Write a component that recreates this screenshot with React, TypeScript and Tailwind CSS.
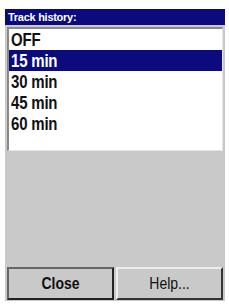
import React, { useState } from "react";

const options = ["OFF", "15 min", "30 min", "45 min", "60 min"];

const App = () => {
  const [selected, setSelected] = useState(1);

  return (
    <div
      className="w-[229px] h-[304px] bg-white flex flex-col pt-[9px] pl-[5px] pr-[4px] pb-[3px]"
      style={{ fontFamily: '"Liberation Sans", Arial, sans-serif' }}
    >
      <div className="flex-1 flex flex-col bg-[#c9c9c9]">
        {/* Title bar */}
        <div className="h-[16px] bg-[#0b0b7e] text-white text-[11px] font-bold leading-[16px] pl-[3px] tracking-tight">
          Track history:
        </div>

        {/* List box */}
        <div className="mt-[2px] ml-[2px] mr-[2px] h-[124px] bg-white border-l-2 border-t-2 border-[#8a8a8a] border-r border-r-[#e4e4e4] border-b border-b-[#e4e4e4] flex flex-col">
          {options.map((opt, i) => (
            <div
              key={opt}
              onClick={() => setSelected(i)}
              className={`h-[21px] leading-[21px] pl-[2px] text-[15px] font-bold tracking-[-0.2px] ${
                i === selected ? "bg-[#0b0b7e] text-white" : "text-[#111]"
              }`}
            >
              <span className="inline-block scale-y-120 origin-center">{opt}</span>
            </div>
          ))}
        </div>

        <div className="flex-1" />

        {/* Buttons */}
        <div className="flex gap-[2px] px-[2px] pb-[1px]">
          <button className="flex-1 h-[33px] bg-[#c9c9c9] border-2 border-[#222] border-l-[#666] border-t-[#666] text-[14px] font-bold text-[#111]">
            <span className="inline-block scale-y-115">Close</span>
          </button>
          <button className="flex-1 h-[33px] bg-[#c9c9c9] border-2 border-[#eee] border-r-[#333] border-b-[#333] text-[14px] text-[#111]">
            <span className="inline-block scale-y-115">Help...</span>
          </button>
        </div>
      </div>
    </div>
  );
};

export default App;
